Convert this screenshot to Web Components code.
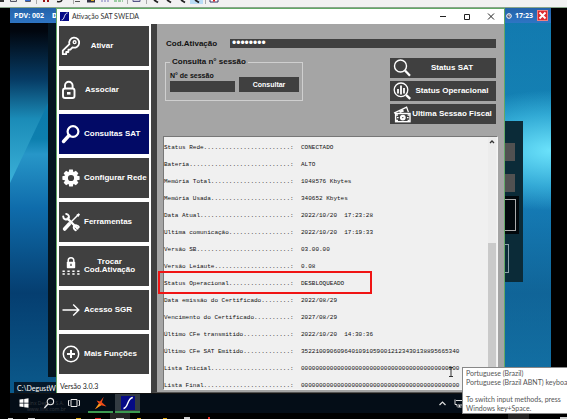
<!DOCTYPE html>
<html lang="pt-BR">
<head>
<meta charset="utf-8">
<title>Ativação SAT SWEDA</title>
<style>
html,body{margin:0;height:100%}
body{background:#000;overflow:hidden;font-family:"Liberation Sans",Arial,sans-serif;font-size:8px;color:#fff}
</style>
</head>
<body>
<viewer-screen></viewer-screen>
<script>
const define=(name,html)=>customElements.define(name,class extends HTMLElement{
  connectedCallback(){
    if(this.shadowRoot)return;
    const root=this.attachShadow({mode:"open"});
    const t=document.createElement("template");
    t.innerHTML="<style>*,::after,::before{box-sizing:border-box}:host{display:block;box-sizing:border-box}button{font:inherit;color:inherit;border:0;padding:0;margin:0}svg{display:block}</style>"+(typeof html==="function"?html(this):html);
    root.append(t.content.cloneNode(true));
  }
});

const icons={
 key:'<g fill="none" stroke="#fff" stroke-width="1.8" stroke-linejoin="round"><path d="M8.4 8.2 1.8 14.7V18.2H5.2V16H7.4V13.7H9.4L11.5 11.4A5 5 0 1 0 8.4 8.2Z"/><circle cx="13.6" cy="6.2" r="1.4" stroke-width="1.4"/></g>',
 lock:'<g fill="none" stroke="#fff" stroke-width="1.9"><rect x="2" y="8.5" width="11.5" height="9.5" rx="2"/><path d="M4 8.5V5.5a3.8 3.8 0 0 1 7.6 0V8.5"/></g><path d="M6 12h3.5v2.6H6z" fill="#fff"/>',
 find:'<g fill="none" stroke="#fff"><circle cx="12" cy="7.5" r="5.4" stroke-width="2.2"/><path d="m8 11.5-5.5 6" stroke-width="3.4" stroke-linecap="round"/></g>',
 gear:'<path fill="#fff" d="M8.2 1.4h3.6l.7 3.2h-5zM8.2 18.6h3.6l.7-3.2h-5zM1.4 8.2v3.6l3.2.7v-5zM18.6 8.2v3.6l-3.2.7v-5z"/><path fill="#fff" transform="rotate(45 10 10)" d="M8.2 1.4h3.6l.7 3.2h-5zM8.2 18.6h3.6l.7-3.2h-5zM1.4 8.2v3.6l3.2.7v-5zM18.6 8.2v3.6l-3.2.7v-5z"/><circle cx="10" cy="10" r="4.8" fill="none" stroke="#fff" stroke-width="3.4"/>',
 tools:'<g fill="none" stroke="#fff" stroke-linecap="round"><path d="M6.5 6.5 16.5 16.5" stroke-width="2.4"/><path d="M2.2 4.5A3.1 3.1 0 0 0 7.5 6.6 3.1 3.1 0 0 0 5.2 1.9" stroke-width="2"/><path d="M17.8 15A3 3 0 0 0 13 14.2 3 3 0 0 0 14.8 18.2" stroke-width="2"/><path d="m17.5 2.5-7 7" stroke-width="1.4"/><path d="m8.2 12-4.6 5" stroke-width="3.6"/></g><path d="m15.2 3 2.6-1.8 1.2 1.3-1.7 2.5z" fill="#fff"/>',
 code:'<path d="M7.2 6V4.6a2.8 2.8 0 0 1 5.6 0V6" fill="none" stroke="#fff" stroke-width="1.5"/><rect x="5.8" y="5.8" width="8.4" height="6.4" rx=".8" fill="#fff"/><path d="M10 7.8v2.2" stroke="#404040" stroke-width="1.3"/><path d="M1.5 15.2h17M1.5 18h17" stroke="#fff" stroke-width="1.5" stroke-dasharray="2.3 2.6"/>',
 arrow:'<path d="M1.5 10h16M12.2 4.5l5.6 5.5-5.6 5.5" fill="none" stroke="#fff" stroke-width="1.4"/>',
 plus:'<circle cx="10" cy="10" r="7.7" fill="none" stroke="#fff" stroke-width="1.5"/><path d="M10 6v8M6 10h8" stroke="#fff" stroke-width="2"/>',
 status:'<g fill="none" stroke="#fff"><circle cx="8.5" cy="8" r="6" stroke-width="1.4"/><path d="m13 12.5 5 5.2" stroke-width="2.3"/></g>',
 chart:'<g fill="none" stroke="#fff"><circle cx="9" cy="8.8" r="6.8" stroke-width="1.3"/><path d="m14 13.8 4.2 4" stroke-width="2.4"/><path d="M6 8v4.5M9 4.5v9M12 7v5.5" stroke-width="1.8"/></g>',
 cash:'<g fill="none" stroke="#fff"><path d="M2 9.2 14.6 3.1l1.8 5" stroke-width="1.3"/><path d="m7.5 8 4-1.7" stroke-width="2.4"/><rect x="3.6" y="9.5" width="14.4" height="8.2" stroke-width="1.4"/><circle cx="10.8" cy="13.6" r="1.8" stroke-width="2.2"/><path d="M5 13.6h1.6M15 13.6h1.6M4 11h2M15.6 11h2M4 16.3h2M15.6 16.3h2" stroke-width="1.3"/></g>'
};
const logo='<rect width="14" height="14" fill="#050a86"/><path d="M2.5 12.5C7.5 12 6 2 11.8 1.5" fill="none" stroke="#fff" stroke-width="1.4"/>';

define("sw-icon",el=>`<style>:host{width:20px;height:20px;flex:none}svg{width:100%;height:100%}</style><svg viewBox="0 0 20 20" aria-hidden="true">${icons[el.getAttribute("name")]}</svg>`);

define("nav-button",el=>`<style>
 button{display:flex;align-items:center;width:100%;height:40px;padding:0 2px;gap:3px;background:#404040;font-weight:700;line-height:8px}
 :host([current]) button{background:#020a66}
 span{min-width:36px;text-align:center;white-space:nowrap}
</style><button type="button"${el.hasAttribute("current")?' aria-current="page"':""}><sw-icon name="${el.getAttribute("icon")}"></sw-icon><span><slot></slot></span></button>`);

define("side-nav",`<style>
 :host{width:94px;flex:none;background:#fff;padding:2px 2px 0}
 nav{display:flex;flex-direction:column;gap:4px}
 p{margin:8px 0 0 1px;color:#222;font:7px/9px Lato,sans-serif}
</style><nav>
<nav-button icon="key">Ativar</nav-button>
<nav-button icon="lock">Associar</nav-button>
<nav-button icon="find" current>Consultas SAT</nav-button>
<nav-button icon="gear">Configurar Rede</nav-button>
<nav-button icon="tools">Ferramentas</nav-button>
<nav-button icon="code">Trocar<br>Cod.Ativação</nav-button>
<nav-button icon="arrow">Acesso SGR</nav-button>
<nav-button icon="plus">Mais Funções</nav-button>
</nav><p>Versão 3.0.3</p>`);

define("query-button",el=>`<style>
 button{display:flex;align-items:center;width:100%;height:20px;background:#404040;padding:0 4px 0 2px;font-weight:700;line-height:10px}
 span{flex:1;text-align:center;white-space:nowrap}
</style><button type="button"><sw-icon name="${el.getAttribute("icon")}"></sw-icon><span><slot></slot></span></button>`);

define("query-form",`<style>
 :host{color:#111;font-weight:700;padding:14px 8px 0}
 .code{display:flex;align-items:center;gap:15px;height:10px}
 .code label{width:50px;padding-left:1px;white-space:nowrap}
 input{min-width:0;border:0;margin:0;border-radius:0;background:#404040;color:#fff;padding:0 2px;outline:0}
 .code input{flex:1;height:9px;font:12px/9px "Liberation Sans",sans-serif}
 .mid{display:flex;justify-content:space-between;margin-top:9px}
 fieldset{margin:0;height:44px;width:138px;border:1px solid #cfcfcf;padding:0 3px 8px 4px;display:flex;align-items:flex-end;gap:4px}
 legend{padding:0 2px;line-height:10px}
 .f{display:flex;flex-direction:column;width:65px;font-size:7px;line-height:9px;gap:1px}
 .f input{width:100%;height:11px}
 fieldset button{flex:1;height:15px;background:#404040;color:#fff;font-size:7px}
 .acts{display:flex;flex-direction:column;gap:3px;width:106px;padding-top:1px;color:#fff}
</style>
<div class="code"><label for="c">Cod.Ativação</label><input id="c" type="password" value="12345678"></div>
<div class="mid"><fieldset><legend>Consulta n° sessão</legend><div class="f"><label for="s">N° de sessão</label><input id="s"></div><button type="button">Consultar</button></fieldset>
<div class="acts"><query-button icon="status">Status SAT</query-button><query-button icon="chart">Status Operacional</query-button><query-button icon="cash">Ultima Sessao Fiscal</query-button></div></div>`);

const rows=[["Status Rede","CONECTADO"],["Bateria","ALTO"],["Memória Total","1048576 Kbytes"],["Memória Usada","340652 Kbytes"],["Data Atual","2022/10/20  17:23:28"],["Ultima comunicação","2022/10/20  17:19:33"],["Versão SB","03.00.00"],["Versão Leiaute","0.08"],["Status Operacional","DESBLOQUEADO"],["Data emissão do Certificado","2022/08/29"],["Vencimento do Certificado","2027/08/29"],["Último CFe transmitido","2022/10/20  14:30:36"],["Último CFe SAT Emitido","35221009060964010910590012123430138895665340"],["Lista Inicial","0".repeat(44)],["Lista Final","0".repeat(44)]];
define("status-log",`<style>
 :host{display:flex;margin:0 6px 2px;flex:1;min-height:0;background:#f0f0f0;border:1px solid #777;border-right-color:#f5f5f5;border-bottom-color:#f5f5f5;color:#111;font:6px/17px "Liberation Mono","Courier New",monospace}
 dl{margin:0;flex:1;min-width:0;padding-top:2px}
 .row{display:flex;position:relative;height:17px;white-space:pre}
 dt{width:137px;flex:none}dd{margin:0}
 .mark::after{content:"";position:absolute;left:-6px;top:-4px;width:214px;height:23px;border:2px solid #f01414}
 .bar{width:8px;margin-right:1px;background:#ececec;display:flex;flex-direction:column}
 .bar svg{width:8px;height:9px}
 .thumb{margin-top:auto;height:58%;background:#cacaca}
</style><dl>${rows.map(([k,v])=>`<div class="row${k==="Status Operacional"?" mark":""}"><dt>${k.padEnd(35,".")}:</dt><dd>${v}</dd></div>`).join("")}</dl>
<div class="bar"><svg viewBox="0 0 8 9"><path d="m2 6 2-2 2 2" fill="none" stroke="#333" stroke-width="1.3"/></svg><div class="thumb"></div></div>`);

define("app-window",`<style>
 :host{display:flex;flex-direction:column;border:1px solid #62a866;border-bottom:0;background:#fff;color:#333}
 header{display:flex;align-items:center;height:15px;padding:0 9px 0 3px;gap:3px;font:7px/15px Lato,sans-serif}
 header>svg{width:9px;height:9px}
 h1{font:inherit;margin:0;flex:1}
 .c{display:flex;gap:16px}.c button{background:none;width:8px;height:9px}.c svg{width:8px;height:9px}
 .body{display:flex;flex:1;min-height:0;color:#fff}
 main{flex:1;min-width:0;display:flex;flex-direction:column;background:#a5a5a5;border-left:6px solid #404040;border-bottom:1px solid #555}
 query-form{height:112px;flex:none}
</style><header><svg viewBox="0 0 14 14">${logo}</svg><h1>Ativação SAT SWEDA</h1><div class="c">
<button aria-label="Minimizar"><svg viewBox="0 0 8 9"><path d="M1 4.5h6" stroke="#222"/></svg></button>
<button aria-label="Maximizar"><svg viewBox="0 0 8 9"><path d="M1.5 2.5h5v5h-5z" fill="none" stroke="#222"/></svg></button>
<button aria-label="Fechar"><svg viewBox="0 0 8 9"><path d="m1 1.5 6 6m0-6-6 6" stroke="#222"/></svg></button></div></header>
<div class="body"><side-nav></side-nav><main><query-form></query-form><status-log></status-log></main></div>`);

define("pos-screen",`<style>
 :host{position:relative;overflow:hidden;background:radial-gradient(ellipse 120px 60px at 100% 37%,#6be2fb 0,#45c4ea99 60%,transparent 100%),linear-gradient(90deg,transparent 50%,#1a86bb88 90%),linear-gradient(#0a6aa0 0,#0d7fae 34%,#2796c8 38%,#0f6cab 52%,#053e70 74%,#0b5a8c 100%)}
 header{display:flex;align-items:center;height:15px;padding:0 3px 0 4px;background:linear-gradient(#2462a9,#2e75c4);font:700 7px/15px "Open Sans",sans-serif}
 header b{margin-left:8px;flex:1}header svg{width:6px;height:6px;margin-right:3px}
 header button{width:11px;height:11px;margin-left:4px;background:#dc2b30;border:1px solid #ef8080}
 header button svg{width:9px;height:9px;margin:0}
 .ray,.left,.right{position:absolute;background:#041521}
 .ray{left:0;top:15px;width:38px;height:160px;background:linear-gradient(#01060e 5%,#063a63 35%,#1b8cb8 60%,#3bb0d8);clip-path:polygon(0 0,100% 0,100% 50%,0 100%)}
 .left{left:38px;top:15px;bottom:16px;width:12px}
 .right{right:28px;top:113px;width:19px;height:161px;background:#0b2b38;padding-top:22px;display:flex;flex-direction:column;gap:13px}
 .right i{width:11px;height:18px;background:#515151}
 .right u{width:15px;height:38px;margin-top:-9px;border:3px solid #02080c;border-left:0;background:#02080c;display:flex}
 .right u::before{content:"";flex:1;border:1px solid #aaa;border-left:0}
 .right em{width:5px;height:29px;margin-top:-3px;border:1px solid #8ba0a8;border-left:0}
 .path{position:absolute;left:4px;bottom:0;height:11px;width:50px;padding-left:3px;background:#051a2c;font:7px/12px Lato,sans-serif;white-space:nowrap}
 app-window{position:absolute;left:46px;right:46px;top:0;bottom:0}
</style><header><span>PDV: 002</span><b>DA</b><svg viewBox="0 0 6 6"><circle cx="3" cy="3" r="2.3" fill="#557" stroke="#fff"/><path d="M3 1.5V3h1.3" stroke="#fff" stroke-width=".7" fill="none"/></svg><span>17:23</span><button aria-label="Sair"><svg viewBox="0 0 9 9"><path d="m1.5 1.5 6 6m0-6-6 6" stroke="#fff" stroke-width="1.8"/></svg></button></header>
<div class="ray"></div><div class="left"></div><div class="right"><i></i><i></i><u></u><em></em></div><div class="path">C:\\DegustWin\\</div><app-window></app-window>`);

define("task-bar",`<style>
 :host{display:flex;align-items:stretch;height:20px;background:#040d17;border-top:1px solid #111;padding-left:1px;position:relative}
 button{width:25px;background:none;display:flex;align-items:center;justify-content:center;border-bottom:2px solid transparent;z-index:1}
 button svg{width:14px;height:14px}
 .run{border-color:#3c9a50}.on{background:#333b42}
 .g{flex:none;width:2px}
 .sp{flex:1}
 .tray{display:flex;align-items:center;gap:7px;margin-right:88px;position:relative}
 .tray svg{width:9px;height:9px}
 small{position:absolute;left:17px;top:6px;color:#33383e;font:5px/6px "Open Sans",sans-serif;white-space:pre}
</style><small>Linx Degust S.A.
www.linx.com.br</small>
<button aria-label="Iniciar"><svg viewBox="0 0 14 14"><path d="M2.5 3.5 6.5 3v3.700h-4zM7.200 2.900l4.300-.6v4.400H7.200zM2.500 7.400h4v3.700l-4-.5zM7.200 7.400h4.300v4.400l-4.300-.6z" fill="#fff"/></svg></button>
<button aria-label="Pesquisar"><svg viewBox="0 0 14 14"><g fill="none" stroke="#e8e8e8"><circle cx="8.400" cy="5.600" r="3.200" stroke-width="1.100"/><path d="m6 8-3.600 4" stroke-width="1.300"/></g></svg></button>
<button aria-label="Visão de tarefas"><svg viewBox="0 0 14 14"><path d="M4 3.500h6v7H4zM2.500 4.500h-1v5h1M11.500 4.500h1v5h-1" fill="none" stroke="#e8e8e8"/></svg></button>
<span class="g"></span>
<button class="run" aria-label="Linx"><svg viewBox="0 0 14 14"><path d="M9.800.8 7.800 6.200 12.500 10.500 7 9.200 1 13.200 4.900 7.800 2.500 4.500 6 5.500z" fill="#f04a18"/><path d="m1 13.200 3.900-5.400 2.500 1.300z" fill="#f6a01c"/></svg></button>
<span class="g"></span>
<button class="run on" aria-label="Ativação SAT SWEDA"><svg viewBox="0 0 14 14">${logo}</svg></button>
<span class="sp"></span>
<div class="tray"><svg viewBox="0 0 9 9"><path d="m1.500 6 3-3 3 3" fill="none" stroke="#ddd" stroke-width="1.200"/></svg><svg viewBox="0 0 9 9"><path d="M2 1.500h6.500v4.500H4M5.500 6v2M3.500 8h4M1 .5v5h2v2" fill="none" stroke="#ddd"/></svg></div>`);

define("lang-tip",`<style>
 :host{background:#fff;border:1px solid #888;border-right:0;color:#555;font:7px/9px Lato,sans-serif;padding:1px 0 0 3px;white-space:nowrap;overflow:hidden}
 p{margin:0 0 8px}p+p{margin:0}
</style><p>Portuguese (Brazil)<br>Portuguese (Brazil ABNT) keyboa</p><p>To switch input methods, press<br>Windows key+Space.</p>`);

define("tool-strip",`<style>
 :host{height:8px;background:#f1f1f1;border-bottom:1px solid #89a58a;overflow:hidden}
 svg{width:220px;height:7px}
</style><svg viewBox="0 0 220 7">
<path d="M0 0h4v2H0z" fill="#333"/><path d="M10.500 0v1.500h6V0M25.500 0v1.500h5V0" fill="#ddd" stroke="#556"/><path d="M25 0h5v1h-5z" fill="#36c"/>
<path d="M36.500 0v4M73.500 0v4M127.500 0v4M146.500 0v4M205.500 0v4" stroke="#aaa"/>
<path d="M43 0h2v2h-2zM47 0h2v2h-2z" fill="#911"/><path d="M57 1.500q4 1 5-1.500" fill="none" stroke="#222" stroke-width="1.500"/>
<path d="M75 1.500h5" stroke="#555"/><path d="M87 0h8v2.500h-8z" fill="#334"/><path d="M91 0h3v1h-3z" fill="#da2"/><path d="M101 1h8" stroke="#77b" stroke-dasharray="2 1"/><path d="M114 1h9" stroke="#4a5" stroke-dasharray="3 1"/>
<path d="M133 0v1.500h7V0" stroke="#558" fill="#ccd"/><path d="M190 0h13v4h-13z" fill="#b9dcf5"/>
<path d="m154 0 4 2.500M167 0l4 2.500M181 0l4 2.500M195 0l4 2.500" stroke="#222" stroke-width="1.800"/><path d="M210 0v2h8V0" stroke="#336" fill="#fff"/><path d="M213 0h2v1.500h-2z" fill="#d22"/></svg>`);

define("host-bar",`<style>:host{height:6px;background:#000;overflow:hidden}svg{width:567px;height:6px}</style>
<svg viewBox="0 0 567 6"><path d="M110 0h20v6h-20zM508 0h21v6h-21z" fill="#252525"/><path d="M8 5h5v1H8zM28 5h7v1h-7zM116 5h8v1h-8zM184 4h6v2h-6zM560 4h7v2h-7z" fill="#ccc"/><path d="M76 5h5v1h-5zM137 5h4v1h-4zM163 5h4v1h-4z" fill="#d9a514"/><path d="M95 5h6v1h-6zM208 4h2v2h-2z" fill="#e3302a"/></svg>`);

define("viewer-screen",`<style>
 :host{position:relative;display:flex;flex-direction:column;height:100vh;overflow:hidden}
 .remote{flex:1;min-height:0;display:flex;flex-direction:column;margin:0 16px 0 10px}
 pos-screen{flex:1;min-height:0}
 lang-tip{position:absolute;left:calc(100% - 105px);right:0;bottom:5px;height:47px}
 .cursor{position:absolute;right:113px;bottom:42px;width:6px;height:10px}
</style><tool-strip></tool-strip><div class="remote"><pos-screen></pos-screen><task-bar></task-bar></div><host-bar></host-bar>
<svg class="cursor" viewBox="0 0 6 10"><path d="M1 .5h4M3 .5v9M1 9.500h4" stroke="#333" fill="none"/></svg><lang-tip></lang-tip>`);
</script>
</body>
</html>
